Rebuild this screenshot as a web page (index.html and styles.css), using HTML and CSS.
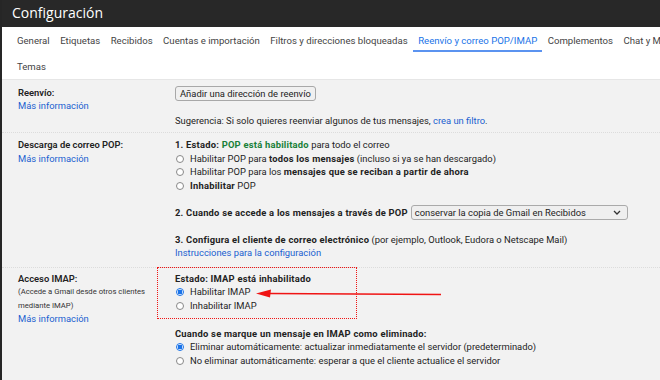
FILE: index.html
```html
<!DOCTYPE html>
<html>

<head>
    <title>Configuración</title>
    <link rel="stylesheet" href="styles.css">
</head>

<body>
    <header class="topbar">
        <h1>Configuración</h1>
    </header>

    <nav class="tabs">
        <a href="#">General</a>
        <a href="#">Etiquetas</a>
        <a href="#">Recibidos</a>
        <a href="#">Cuentas e importación</a>
        <a href="#">Filtros y direcciones bloqueadas</a>
        <a href="#" class="active">Reenvío y correo POP/IMAP</a>
        <a href="#">Complementos</a>
        <a href="#">Chat y Meet</a>
        <span class="tab-break"></span>
        <a href="#">Temas</a>
    </nav>

    <main class="settings">
        <section class="row row-forward">
            <div class="label">
                <b>Reenvío:</b>
                <a href="#">Más información</a>
            </div>
            <div class="value">
                <button type="button" class="btn">Añadir una dirección de reenvío</button>
                <p class="hint">Sugerencia: Si solo quieres reenviar algunos de tus mensajes, <a href="#">crea un filtro</a>.</p>
            </div>
        </section>

        <section class="row row-pop">
            <div class="label">
                <b>Descarga de correo POP:</b>
                <a href="#">Más información</a>
            </div>
            <div class="value">
                <div><b>1. Estado: <span class="ok">POP está habilitado</span></b> para todo el correo</div>
                <label class="opt"><span class="radio"></span>Habilitar POP para <b>todos los mensajes</b> (incluso si ya se han descargado)</label>
                <label class="opt"><span class="radio"></span>Habilitar POP para los <b>mensajes que se reciban a partir de ahora</b></label>
                <label class="opt"><span class="radio"></span><b>Inhabilitar</b> POP</label>

                <div class="step step-2">
                    <b>2. Cuando se accede a los mensajes a través de POP</b>
                    <span class="select">conservar la copia de Gmail en Recibidos
                        <svg width="8" height="5" viewBox="0 0 8 5"><path d="M1 1l3 3 3-3" fill="none" stroke="#333" stroke-width="1.3"/></svg>
                    </span>
                </div>

                <div class="step step-3">
                    <b>3. Configura el cliente de correo electrónico</b> (por ejemplo, Outlook, Eudora o Netscape Mail)
                    <a href="#" class="block">Instrucciones para la configuración</a>
                </div>
            </div>
        </section>

        <section class="row row-imap">
            <div class="label">
                <b>Acceso IMAP:</b>
                <small>(Accede a Gmail desde otros clientes mediante IMAP)</small>
                <a href="#">Más información</a>
            </div>
            <div class="value">
                <div><b>Estado: IMAP está inhabilitado</b></div>
                <label class="opt"><span class="radio on"></span>Habilitar IMAP</label>
                <label class="opt"><span class="radio"></span>Inhabilitar IMAP</label>

                <div class="step step-del">
                    <b>Cuando se marque un mensaje en IMAP como eliminado:</b>
                    <label class="opt"><span class="radio on"></span>Eliminar automáticamente: actualizar inmediatamente el servidor (predeterminado)</label>
                    <label class="opt"><span class="radio"></span>No eliminar automáticamente: esperar a que el cliente actualice el servidor</label>
                </div>
            </div>
            <div class="mark-box"></div>
            <svg class="mark-arrow" width="190" height="12" viewBox="0 0 190 12">
                <path d="M186 6.5 L14 5.5" stroke="#f01414" stroke-width="1.6" fill="none"/>
                <path d="M1 5.5 L16 1.5 L15 9.5 Z" fill="#f01414"/>
            </svg>
        </section>
    </main>
</body>

</html>
```

FILE: styles.css
```css
body {
    margin: 0;
    font-family: Roboto, 'Liberation Sans', Arial, sans-serif;
    font-size: 9.4px;
    color: #222;
    background-color: #f2f2f2;
    border-left: 2px solid #262626;
    min-height: 380px;
    overflow: hidden;
}

a {
    color: #1a5fd0;
    text-decoration: none;
}

b {
    font-weight: 700;
    letter-spacing: 0.22px;
}

.topbar {
    background-color: #282828;
    height: 27px;
    margin-left: -2px;
    padding-left: 12px;
    display: flex;
    align-items: center;
}

.topbar h1 {
    margin: 0 0 2px;
    font-size: 14px;
    font-weight: 400;
    color: #fff;
    font-family: 'Open Sans', Roboto, sans-serif;
}

.tabs {
    background-color: #fff;
    height: 52px;
    padding: 0 0 0 15px;
    display: flex;
    flex-wrap: wrap;
    column-gap: 10.5px;
    border-bottom: 1px solid #e6e6e6;
    width: 760px;
}

.tabs a {
    color: #444;
    font-size: 9.6px;
    height: 25px;
    line-height: 27px;
    box-sizing: border-box;
}

.tab-break {
    flex-basis: 100%;
    height: 0;
}

.tabs a.active {
    color: #1a73e8;
    border-bottom: 2px solid #5b93f0;
    padding: 0 5px;
    margin: 0 -5px;
}

.row {
    display: grid;
    grid-template-columns: 173px 1fr;
    position: relative;
    border-top: 1px dotted #dcdcdc;
    line-height: 13.4px;
}

.row:first-child {
    border-top: none;
}

.label {
    padding-left: 16px;
    display: flex;
    flex-direction: column;
}

.label b {
    font-weight: 600;
    letter-spacing: 0;
}

.label small {
    font-size: 7.7px;
    line-height: 13.4px;
    color: #333;
    width: 140px;
}

.row-forward {
    padding: 6px 0 5px;
}

.btn {
    font: inherit;
    font-size: 9.4px;
    color: #222;
    background-color: #f0f0f0;
    border: 1px solid #a8a8a8;
    border-radius: 3px;
    padding: 0 4px;
    height: 15px;
    line-height: 13px;
    margin: 0;
}

.hint {
    margin: 13px 0 0;
}

.row-pop {
    padding: 5px 0 7px;
}

.row-imap {
    padding: 4px 0 20px;
}

.ok {
    color: #188038;
}

.opt {
    display: block;
    white-space: nowrap;
}

.radio {
    display: inline-block;
    vertical-align: -1px;
    width: 8px;
    height: 8px;
    border: 1px solid #888;
    border-radius: 50%;
    box-sizing: border-box;
    margin: 0 6px 0 1px;
    background-color: #fff;
}

.radio.on {
    border-color: #1a73e8;
    background: radial-gradient(circle, #1a73e8 0 2.2px, #fff 2.6px);
}

.step-2 {
    margin-top: 13px;
    display: flex;
    align-items: center;
    gap: 3px;
}

.select {
    display: inline-flex;
    align-items: center;
    justify-content: space-between;
    width: 217px;
    height: 15px;
    box-sizing: border-box;
    border: 1px solid #aaa;
    border-radius: 3px;
    background-color: #efefef;
    padding: 0 6px 0 3px;
}

.step-3 {
    margin-top: 13px;
}

.block {
    display: block;
}

.step-del {
    margin-top: 15px;
}

.mark-box {
    position: absolute;
    left: 155px;
    top: -1px;
    width: 200px;
    height: 52px;
    border: 1.5px dotted #f01414;
    box-sizing: border-box;
}

.mark-arrow {
    position: absolute;
    left: 253px;
    top: 20px;
}
```
